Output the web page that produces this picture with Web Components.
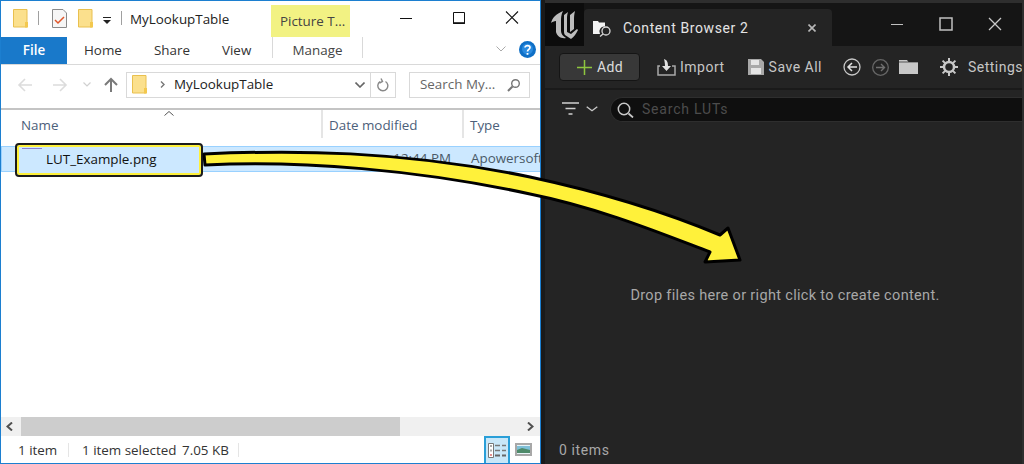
<!DOCTYPE html>
<html>
<head>
<meta charset="utf-8">
<title>Import LUT</title>
<style>
  html, body { margin: 0; padding: 0; background: #242424; }
  body { width: 1024px; height: 464px; overflow: hidden; position: relative; display: flex; }
</style>
</head>
<body>
<file-explorer></file-explorer>
<content-browser></content-browser>
<drag-arrow></drag-arrow>

<script>
const FOLDER = `<svg viewBox="0 0 15 19" width="15" height="19"><path d="M.5.5h13.5v17.5H.5z" fill="#fbe08d" stroke="#e9c04e"/><path d="M12 13h3v5.5h-3z" fill="#f3c84e"/></svg>`;
const UI_FONT = `13.4px "Open Sans", sans-serif`;

class ExplorerTitlebar extends HTMLElement {
  constructor() {
    super();
    this.attachShadow({ mode: "open" });
    this.shadowRoot.innerHTML = `
      <style>
        :host { display: flex; align-items: flex-start; height: 36px; font: ${UI_FONT}; color: #222; }
        .ico { display: flex; margin-top: 8px; flex: none; }
        .sep { width: 1px; height: 14px; background: #a0a0a0; margin-top: 10px; flex: none; }
        .title { margin-left: 8px; margin-top: 9px; line-height: 18px; width: 141px; flex: none; }
        .ctx { margin-top: 4px; width: 79px; height: 32px; background: #f2f283; color: #444; line-height: 33px; padding-left: 9px; box-sizing: border-box; flex: none; white-space: nowrap; }
        .ctrl { display: flex; margin-left: 47px; margin-top: 9px; gap: 35px; }
        svg { display: block; }
      </style>
      <div class="ico" style="margin-left:12px">${FOLDER}</div>
      <div class="sep" style="margin-left:10px"></div>
      <div class="ico" style="margin-left:13px">
        <svg width="15" height="19" viewBox="0 0 15 19"><path d="M.5.5H11l3.500 3.500v14.500H.5z" fill="#f6f6f6" stroke="#8a8a8a"/><path d="M3 11l3 3 6-6" fill="none" stroke="#e0562a" stroke-width="1.500"/></svg>
      </div>
      <div class="ico" style="margin-left:11px">${FOLDER}</div>
      <div class="ico" style="margin-left:10px;margin-top:16px">
        <svg width="8" height="8" viewBox="0 0 8 8"><path d="M0 .5h8" stroke="#222"/><path d="M0 3h8L4 7z" fill="#222"/></svg>
      </div>
      <div class="sep" style="margin-left:10px"></div>
      <div class="title">MyLookupTable</div>
      <div class="ctx">Picture T...</div>
      <div class="ctrl">
        <svg width="18" height="14" viewBox="0 0 18 14"><path d="M3 8.500h12" stroke="#111"/></svg>
        <svg width="18" height="14" viewBox="0 0 18 14"><path d="M3.500 2.500h11v11h-11z" fill="none" stroke="#111"/><path d="M3 13h12" stroke="#111" stroke-width="1.600"/></svg>
        <svg width="18" height="14" viewBox="0 0 18 14"><path d="M3 1.500l12 12M15 1.500l-12 12" stroke="#111" stroke-width="1.100"/></svg>
      </div>
    `;
  }
}
customElements.define("explorer-titlebar", ExplorerTitlebar);

class ExplorerTabs extends HTMLElement {
  constructor() {
    super();
    this.attachShadow({ mode: "open" });
    this.shadowRoot.innerHTML = `
      <style>
        :host { display: flex; height: 27px; border-bottom: 1px solid #d9d9d9; font: ${UI_FONT}; color: #333; line-height: 27px; }
        .file { width: 66px; background: #1979ca; color: #fff; text-align: center; font-weight: 600; }
        .tab { margin-left: 17px; }
        .manage { margin-left: 19px; width: 91px; text-align: center; height: 21px; line-height: 27px; border-left: 1px solid #d9d9d9; border-right: 1px solid #d9d9d9; box-sizing: border-box; color: #444; }
        .right { margin-left: auto; display: flex; align-items: center; gap: 13px; padding-right: 4px; padding-bottom: 3px; }
        svg { display: block; }
      </style>
      <div class="file">File</div>
      <div class="tab" style="width:53px">Home</div>
      <div class="tab" style="width:51px">Share</div>
      <div class="tab" style="width:31px">View</div>
      <div class="manage">Manage</div>
      <div class="right">
        <svg width="10" height="6" viewBox="0 0 10 6"><path d="M.5.5L5 5 9.500.5" fill="none" stroke="#aaa"/></svg>
        <svg width="17" height="17" viewBox="0 0 17 17"><circle cx="8.500" cy="8.500" r="8.500" fill="#0f6fc6"/><circle cx="8.500" cy="8" r="5.500" fill="#2a8be0"/><path d="M6 6.500C6 4 11 4 11 6.500 11 8.500 8.500 8.200 8.500 10.500" fill="none" stroke="#fff" stroke-width="1.700"/><path d="M7.600 12h1.800v1.800H7.600z" fill="#fff"/></svg>
      </div>
    `;
  }
}
customElements.define("explorer-tabs", ExplorerTabs);

class ExplorerAddress extends HTMLElement {
  constructor() {
    super();
    this.attachShadow({ mode: "open" });
    this.shadowRoot.innerHTML = `
      <style>
        :host { display: flex; align-items: center; height: 45px; box-sizing: border-box; padding-bottom: 4px; border-bottom: 2px solid #c4c4c4; font: ${UI_FONT}; color: #222; }
        .box { height: 26px; border: 1px solid #d9d9d9; box-sizing: border-box; display: flex; align-items: center; flex: none; }
        svg { display: block; flex: none; }
        .addr { width: 245px; margin-left: 7px; }
        .addr span { margin-left: 9px; margin-bottom: 2px; }
        .refresh { width: 25px; justify-content: center; border-left: 0; }
        .search { width: 121px; margin-left: 13px; color: #666; padding-left: 10px; justify-content: space-between; padding-right: 8px; }
        .search span { margin-bottom: 1px; }
      </style>
      <svg style="margin-left:16px" width="16" height="14" viewBox="0 0 16 14"><path d="M15 7H2M8 1L2 7l6 6" fill="none" stroke="#dcdcdc" stroke-width="1.600"/></svg>
      <svg style="margin-left:19px" width="16" height="14" viewBox="0 0 16 14"><path d="M1 7h13M8 1l6 6-6 6" fill="none" stroke="#dcdcdc" stroke-width="1.600"/></svg>
      <svg style="margin-left:15px" width="8" height="5" viewBox="0 0 8 5"><path d="M.5.5L4 4 7.500.5" fill="none" stroke="#d0d0d0" stroke-width="1.200"/></svg>
      <svg style="margin-left:12px" width="16" height="16" viewBox="0 0 16 16"><path d="M8 15V2M2 8l6-6 6 6" fill="none" stroke="#7a7a7a" stroke-width="2"/></svg>
      <div class="box addr">
        <div style="margin-left:5px;display:flex">${FOLDER}</div>
        <svg style="margin-left:13px" width="5" height="7" viewBox="0 0 5 7"><path d="M1 .5L4 3.500 1 6.500" fill="none" stroke="#777" stroke-width="1.400"/></svg>
        <span>MyLookupTable</span>
        <svg style="margin-left:auto;margin-right:5px" width="10" height="6" viewBox="0 0 10 6"><path d="M.5.500L5 5 9.500.500" fill="none" stroke="#666" stroke-width="1.600"/></svg>
      </div>
      <div class="box refresh">
        <svg width="12" height="14" viewBox="0 0 12 14"><path d="M8.500 3.500A5 5 0 1 1 3 3.600M4 .5l1.500 3L2.500 5" fill="none" stroke="#888" stroke-width="1.400"/></svg>
      </div>
      <div class="box search">
        <span>Search My...</span>
        <svg width="14" height="14" viewBox="0 0 14 14"><circle cx="8.500" cy="5.500" r="3.800" fill="none" stroke="#777" stroke-width="1.400"/><path d="M5.500 8.500L1 13" stroke="#777" stroke-width="2"/></svg>
      </div>
    `;
  }
}
customElements.define("explorer-address", ExplorerAddress);

class ExplorerList extends HTMLElement {
  constructor() {
    super();
    this.attachShadow({ mode: "open" });
    this.shadowRoot.innerHTML = `
      <style>
        :host { display: block; flex: 1; position: relative; font: ${UI_FONT}; color: #222; overflow: hidden; }
        .cols { display: grid; grid-template-columns: 320px 141px 1fr; height: 28px; color: #4c607a; }
        .cols div { height: 28px; line-height: 30px; box-sizing: border-box; }
        .cols div + div { border-left: 2px solid #e5e5e5; padding-left: 6px; }
        .cols div:first-child { padding-left: 20px; }
        .caret { position: absolute; left: 163px; top: 1px; }
        .row { margin-top: 8px; height: 26px; display: grid; grid-template-columns: 320px 141px 1fr; background: #cce8ff; border: 1px solid #99d1ff; border-right: 0; box-sizing: border-box; line-height: 23px; color: #4a5a68; white-space: nowrap; overflow: hidden; }
        .row div:nth-child(2) { text-align: right; padding-right: 12px; }
        .row div:nth-child(3) { padding-left: 8px; }
      </style>
      <svg class="caret" width="10" height="5" viewBox="0 0 10 5"><path d="M.5 4.500L5 .5l4.500 4" fill="none" stroke="#555"/></svg>
      <div class="cols"><div>Name</div><div>Date modified</div><div>Type</div></div>
      <div class="row"><div></div><div>12:44 PM</div><div>Apowersoft</div></div>
    `;
  }
}
customElements.define("explorer-list", ExplorerList);

class ExplorerStatus extends HTMLElement {
  constructor() {
    super();
    this.attachShadow({ mode: "open" });
    this.shadowRoot.innerHTML = `
      <style>
        :host { display: block; font: ${UI_FONT}; color: #333; }
        .bar { height: 19px; background: #f0f0f0; display: flex; align-items: center; }
        .thumb { margin-left: 8px; width: 379px; height: 19px; background: #cdcdcd; }
        .status { height: 27px; display: flex; align-items: center; white-space: nowrap; }
        .sep { width: 1px; height: 14px; background: #e5e5e5; flex: none; }
        .views { margin-left: auto; display: flex; align-items: center; margin-right: 8px; }
        .on { width: 26px; height: 27px; box-sizing: border-box; background: #c9e7f8; border: 2px solid #2a9fd8; border-bottom: 0; display: flex; align-items: center; justify-content: center; }
        svg { display: block; flex: none; }
      </style>
      <div class="bar">
        <svg style="margin-left:5px" width="7" height="9" viewBox="0 0 7 9"><path d="M6 .5L1.500 4.500 6 8.500" fill="none" stroke="#505050" stroke-width="2"/></svg>
        <div class="thumb"></div>
        <svg style="margin-left:auto;margin-right:6px" width="7" height="9" viewBox="0 0 7 9"><path d="M1 .5l4.500 4L1 8.500" fill="none" stroke="#505050" stroke-width="2"/></svg>
      </div>
      <div class="status">
        <span style="margin-left:17px;width:38px">1 item</span>
        <div class="sep" style="margin-left:12px"></div>
        <span style="margin-left:13px;width:93px">1 item selected</span>
        <span style="margin-left:7px;width:46px">7.05 KB</span>
        <div class="sep" style="margin-left:10px"></div>
        <div class="views">
          <div class="on"><svg width="18" height="15" viewBox="0 0 18 15"><path d="M.5.500h5v14h-5z" fill="#fff" stroke="#777"/><path d="M2.500 2h1v2h-1zM2.500 6.500h1v2h-1z" fill="#555"/><path d="M2.500 11h1v2h-1z" fill="#c22"/><path d="M7 2.500h5M14 2.500h4M7 7.500h5M14 7.500h4" stroke="#777" stroke-width="1.300"/><path d="M7 12.500h5M14 12.500h4" stroke="#666" stroke-width="2"/></svg></div>
          <svg style="margin-left:5px" width="17" height="13" viewBox="0 0 17 13"><path d="M0 0h17v13H0z" fill="#a8a8a8"/><path d="M2 2h13v9H2z" fill="#e8f4f8"/><path d="M2 3h13v4H2z" fill="#7fc0d8"/><path d="M2 7l5-2 8 2v3H2z" fill="#4e8a6a"/></svg>
        </div>
      </div>
    `;
  }
}
customElements.define("explorer-status", ExplorerStatus);

class PickedFile extends HTMLElement {
  constructor() {
    super();
    this.attachShadow({ mode: "open" });
    this.shadowRoot.innerHTML = `
      <style>
        :host { position: absolute; left: 15px; top: 143px; width: 188px; height: 34px; box-sizing: border-box; border: 2px solid #1c1c1c; border-radius: 4px; background: #cce8ff; box-shadow: inset 0 0 0 2px #fff13a; font: ${UI_FONT}; color: #111; line-height: 28px; padding-left: 29px; }
        i { position: absolute; left: 5px; top: 3px; width: 20px; height: 1px; background: #8b7fd0; }
      </style>
      <i></i><slot></slot>
    `;
  }
}
customElements.define("picked-file", PickedFile);

class FileExplorer extends HTMLElement {
  constructor() {
    super();
    this.attachShadow({ mode: "open" });
    this.shadowRoot.innerHTML = `
      <style>
        :host { display: flex; flex-direction: column; flex: none; width: 541px; height: 464px; box-sizing: border-box; background: #fff; border: 1px solid #1c7fd0; }
      </style>
      <explorer-titlebar></explorer-titlebar>
      <explorer-tabs></explorer-tabs>
      <explorer-address></explorer-address>
      <explorer-list></explorer-list>
      <explorer-status></explorer-status>
      <picked-file>LUT_Example.png</picked-file>
    `;
  }
}
customElements.define("file-explorer", FileExplorer);

class ToolBtn extends HTMLElement {
  constructor() {
    super();
    this.attachShadow({ mode: "open" });
    this.shadowRoot.innerHTML = `
      <style>
        :host { display: flex; align-items: center; gap: 5px; color: #c6c6c6; font: 14px Roboto, sans-serif; letter-spacing: .5px; white-space: nowrap; flex: none; }
      </style>
      <slot name="icon"></slot><slot></slot>
    `;
  }
}
customElements.define("tool-btn", ToolBtn);

class ContentBrowser extends HTMLElement {
  constructor() {
    super();
    this.attachShadow({ mode: "open" });
    this.shadowRoot.innerHTML = `
      <style>
        :host { display: flex; flex-direction: column; flex: 1; min-width: 0; height: 464px; background: #242424; border-left: 4px solid #1a1a1a; border-right: 2px solid #2e2e2e; box-sizing: border-box; font: 14px Roboto, sans-serif; color: #c6c6c6; overflow: hidden; }
        svg { display: block; flex: none; }
        .top { height: 46px; background: #151515; border-top: 3px solid #2e2e2e; box-sizing: border-box; display: flex; flex: none; }
        .logo { width: 39px; height: 43px; background: #0c0c0c; display: flex; align-items: center; justify-content: center; }
        .tab { margin-top: 6px; width: 248px; background: #242424; border-radius: 4px 4px 0 0; display: flex; align-items: center; color: #e4e4e4; padding-left: 9px; box-sizing: border-box; flex: none; }
        .tab span { margin-left: 10px; letter-spacing: .6px; }
        .tab svg.x { margin-left: auto; margin-right: 16px; }
        .wc { display: flex; margin-left: 58px; gap: 35px; margin-top: 14px; height: 14px; }
        .tools { height: 42px; display: flex; align-items: center; border-bottom: 2px solid #1a1a1a; flex: none; }
        .add { margin-left: 14px; width: 81px; height: 28px; box-sizing: border-box; border: 1px solid #151515; border-radius: 4px; background: #383838; display: flex; align-items: center; color: #dcdcdc; padding-left: 17px; gap: 5px; letter-spacing: .3px; flex: none; }
        .filters { height: 33px; box-sizing: border-box; padding: 7px 0 1px; display: flex; align-items: center; flex: none; }
        .search { margin-left: 12px; flex: 1; height: 25px; box-sizing: border-box; background: #0f0f0f; border: 1px solid #2e2e2e; border-right: 0; border-radius: 13px 0 0 13px; display: flex; align-items: center; padding-left: 6px; color: #4c4c4c; gap: 8px; letter-spacing: .8px; }
        .search span { margin-bottom: 2px; }
        .main { flex: 1; display: flex; flex-direction: column; }
        .hint { margin-top: 165px; text-align: center; padding-left: 3px; color: #a8a8a8; font-size: 14.500px; letter-spacing: .33px; line-height: 16px; white-space: nowrap; }
        .count { margin-top: auto; margin-left: 14px; margin-bottom: 6px; color: #a8a8a8; letter-spacing: .6px; }
      </style>
      <div class="top">
        <div class="logo">
          <svg width="28" height="28" viewBox="0 0 28 28"><path d="M0 12C1 7 5 3 12 0 10 4 10 7 10 10v10c0 3 2 5 5 7-5 1-9-2-10-6V10C3 10 1 11 0 12z" fill="#bdbdbd"/><path d="M13 4l4-3c-1 3-1 5-1 7v13l4 2 6-5 1 1c-2 4-4 7-7 9l-6-4c-1-1-1-3-1-4z" fill="#bdbdbd"/><path d="M19 4l5-4c-1 4-1 6-1 9v9l-4 3z" fill="#bdbdbd"/></svg>
        </div>
        <div class="tab">
          <svg width="20" height="18" viewBox="0 0 20 18"><path d="M0 2h5l1 1.500h6v4a5 5 0 0 0-5 7.500H0z" fill="#f2f2f2"/><circle cx="13" cy="12" r="4" fill="none" stroke="#d8d8d8" stroke-width="1.300"/><path d="M10 15l-3 2.500" stroke="#d8d8d8" stroke-width="1.300"/></svg>
          <span>Content Browser 2</span>
          <svg class="x" width="8" height="8" viewBox="0 0 8 8"><path d="M.5.5l7 7M7.500.5l-7 7" stroke="#b8b8b8" stroke-width="1.600"/></svg>
        </div>
        <div class="wc">
          <svg width="14" height="14" viewBox="0 0 14 14"><path d="M1 7.500h12" stroke="#c0c0c0"/></svg>
          <svg width="14" height="14" viewBox="0 0 14 14"><path d="M1 1h12v12H1z" fill="none" stroke="#c0c0c0" stroke-width="1.500"/></svg>
          <svg width="14" height="14" viewBox="0 0 14 14"><path d="M1 1l12 12M13 1L1 13" stroke="#c8c8c8" stroke-width="1.300"/></svg>
        </div>
      </div>
      <div class="tools">
        <div class="add">
          <svg width="15" height="15" viewBox="0 0 15 15"><path d="M7.500 0v15M0 7.500h15" stroke="#8ec63f" stroke-width="1.500"/></svg>Add
        </div>
        <tool-btn style="margin-left:17px;gap:4px"><svg slot="icon" width="19" height="18" viewBox="0 0 19 18"><path d="M3 8H1v9h17V8h-3" fill="none" stroke="#a8a8a8" stroke-width="1.500"/><path d="M7 1c3 1 4 3 4 7h3l-4.500 5L5 8h3c0-3-.5-5-1-7z" fill="#e0e0e0"/></svg>Import</tool-btn>
        <tool-btn style="margin-left:23px"><svg slot="icon" width="16" height="16" viewBox="0 0 16 16"><path d="M0 0h13l3 3v13H0z" fill="#a8a8a8"/><path d="M3 1h8v5H3zM3 9h10v6H3z" fill="#e4e4e4"/></svg>Save All</tool-btn>
        <svg style="margin-left:21px" width="18" height="18" viewBox="0 0 18 18"><circle cx="9" cy="9" r="8" fill="none" stroke="#c8c8c8" stroke-width="1.300"/><path d="M14 9H5M9 5L5 9l4 4" fill="none" stroke="#e0e0e0" stroke-width="1.500"/></svg>
        <svg style="margin-left:11px" width="17" height="17" viewBox="0 0 17 17"><circle cx="8.500" cy="8.500" r="7.800" fill="none" stroke="#666" stroke-width="1.300"/><path d="M4 8.500h8M9 5l3.500 3.500L9 12" fill="none" stroke="#707070" stroke-width="1.400"/></svg>
        <svg style="margin-left:10px" width="19" height="14" viewBox="0 0 19 14"><path d="M0 0h8l1.500 2H19v12H0z" fill="#c8c8c8"/><path d="M0 2h19" stroke="#242424" stroke-width=".7"/></svg>
        <tool-btn style="margin-left:22px;gap:10px"><svg slot="icon" width="18" height="18" viewBox="0 0 18 18"><circle cx="9" cy="9" r="5" fill="none" stroke="#c8c8c8" stroke-width="2.500"/><path d="M9 0v3.500M9 14.500V18M0 9h3.500M14.500 9H18M2.600 2.600l2.500 2.500M12.900 12.900l2.500 2.500M15.400 2.600l-2.500 2.500M5.100 12.900l-2.500 2.500" stroke="#c8c8c8" stroke-width="2"/></svg>Settings</tool-btn>
      </div>
      <div class="filters">
        <svg style="margin-left:17px;margin-top:-2px" width="17" height="13" viewBox="0 0 17 13"><path d="M0 1h17M3.500 6.500h10M6.500 12h4" stroke="#d0d0d0" stroke-width="1.600"/></svg>
        <svg style="margin-left:7px;margin-top:-1px" width="12" height="6" viewBox="0 0 12 6"><path d="M.7.700l5.300 4 5.300-4" fill="none" stroke="#c8c8c8" stroke-width="1.400"/></svg>
        <div class="search">
          <svg width="17" height="16" viewBox="0 0 17 16"><circle cx="7" cy="7" r="5.700" fill="none" stroke="#c8c8c8" stroke-width="1.500"/><path d="M11.500 11.500l4.500 4" stroke="#c8c8c8" stroke-width="1.700"/></svg>
          <span>Search LUTs</span>
        </div>
      </div>
      <div class="main">
        <div class="hint">Drop files here or right click to create content.</div>
        <div class="count">0 items</div>
      </div>
    `;
  }
}
customElements.define("content-browser", ContentBrowser);

class DragArrow extends HTMLElement {
  constructor() {
    super();
    this.attachShadow({ mode: "open" });
    this.shadowRoot.innerHTML = `
      <style>
        :host { position: absolute; left: 0; top: 0; width: 1024px; height: 464px; pointer-events: none; }
        svg { display: block; }
      </style>
      <svg width="1024" height="464" viewBox="0 0 1024 464">
        <path d="M204 154C290 150 400 150 530 177C600 192 665 212 720 235L728 228L740 260L705 262L710 252C665 235 600 208 530 194C420 170 300 160 205 165Z" fill="#fff13a" stroke="#000" stroke-width="3" stroke-linejoin="round"/>
      </svg>
    `;
  }
}
customElements.define("drag-arrow", DragArrow);
</script>
</body>
</html>
